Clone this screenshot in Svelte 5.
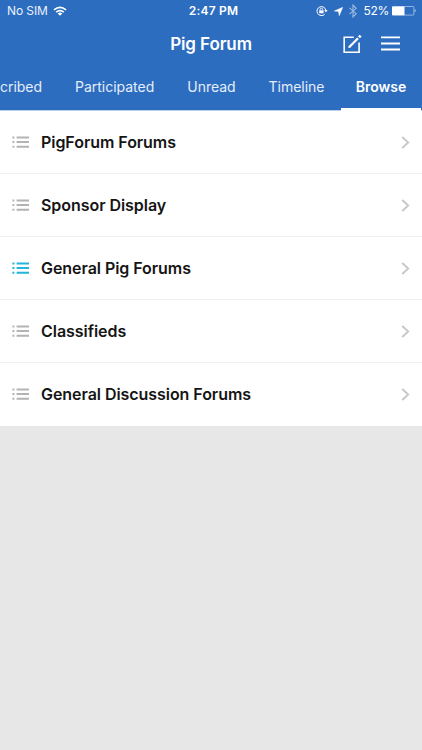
<script>
  const tabs = [
    { label: 'Subscribed' },
    { label: 'Participated' },
    { label: 'Unread' },
    { label: 'Timeline' },
    { label: 'Browse', active: true }
  ];
  const forums = [
    { name: 'PigForum Forums' },
    { name: 'Sponsor Display' },
    { name: 'General Pig Forums', unread: true },
    { name: 'Classifieds' },
    { name: 'General Discussion Forums' }
  ];
</script>

<div class="screen">
  <header>
    <div class="status">
      <div class="carrier">
        <span>No SIM</span>
        <svg width="14" height="10" viewBox="0 0 14 10" fill="none" stroke="#fff" stroke-width="1.7">
          <path d="M1 3.8Q7-1.2 13 3.8" />
          <path d="M3.2 6.2Q7 3 10.8 6.2" />
          <path d="M4.7 7.5Q7 5.7 9.3 7.5L7 9.8Z" fill="#fff" stroke="none" />
        </svg>
      </div>
      <span class="time">2:47 PM</span>
      <div class="indicators">
        <svg class="lock" width="12" height="12" viewBox="0 0 12 12" fill="none" stroke="#fff">
          <path d="M8.6 9.4A4.5 4.5 0 1 1 9.9 5.2" stroke-width="1" />
          <path d="M8.3 5.1H11.6L9.9 7.4Z" fill="#fff" stroke="none" />
          <rect x="3.2" y="5.3" width="4.4" height="3" fill="#fff" stroke="none" />
          <path d="M4.1 5.4V4.5A1.3 1.3 0 0 1 6.7 4.5V5.4" stroke-width=".9" />
        </svg>
        <svg class="arrow" width="9" height="9" viewBox="0 0 9 9"><path d="M8.8.2L5.2 8.8L4.5 4.6L.2 4.1Z" fill="#fff" stroke="#fff" stroke-width=".4" /></svg>
        <svg class="bluetooth" width="8" height="14" viewBox="0 0 8 14" fill="none" stroke="#9dbce4" stroke-width="1.1">
          <path d="M.5 3.9L7.2 9.7L4 12.9V1.1L7.2 4.3L.5 10.1" />
        </svg>
        <span class="percent">52%</span>
        <svg width="24" height="10" viewBox="0 0 24 10">
          <rect x=".5" y=".5" width="21.4" height="8.6" rx=".8" fill="none" stroke="#a9c5e9" stroke-width=".8" />
          <rect x="0" y=".5" width="12.5" height="8.8" rx=".6" fill="#fff" />
          <path d="M22.7 3.1Q24.6 4.8 22.7 6.5Z" fill="#c4d8f0" />
        </svg>
      </div>
    </div>

    <div class="titlebar">
      <h1>Pig Forum</h1>
      <div class="actions">
        <svg width="20" height="20" viewBox="0 0 20 20" fill="none" stroke="#fff">
          <path d="M11.8 3.3H2.2V18.2H17.1V8.6" stroke-width="1.6" />
          <path d="M7.3 13L16 4.2" stroke-width="2.2" />
          <path d="M6.3 14.1L6.8 11.7L8.7 13.6Z" fill="#fff" stroke="none" />
          <path d="M17 3.2L18.6 1.6" stroke-width="2.7" />
        </svg>
        <svg width="19" height="15" viewBox="0 0 19 15" stroke="#fff" stroke-width="1.8">
          <path d="M0 1.4H19M0 7.5H19M0 13.5H19" />
        </svg>
      </div>
    </div>

    <nav>
      {#each tabs as tab}
        <div class="tab" class:active={tab.active}>{tab.label}</div>
      {/each}
    </nav>
  </header>

  <main>
    {#each forums as forum}
      <div class="row">
        <svg class="list" class:unread={forum.unread} width="17" height="12" viewBox="0 0 17 12" stroke="currentColor" stroke-width="2">
          <path d="M.4 1.6H2.4M.4 6.1H2.4M.4 10.7H2.4M4.6 1.6H17M4.6 6.1H17M4.6 10.7H17" />
        </svg>
        <span class="name">{forum.name}</span>
        <svg class="chevron" width="9" height="13" viewBox="0 0 9 13" fill="none" stroke="#c7c7cc" stroke-width="1.9">
          <path d="M1.2 1L7.2 6.5L1.2 12" />
        </svg>
      </div>
    {/each}
  </main>
</div>

<style>
  .screen {
    width: 422px;
    height: 750px;
    overflow: hidden;
    background: #e7e7e7;
    font-family: Inter, "Liberation Sans", sans-serif;
  }
  svg { display: block; flex: none; }
  header {
    height: 110px;
    background: #2d6dc0;
    color: #fff;
    border-bottom: 1px solid #b9d0ef;
    box-sizing: content-box;
  }
  .status {
    display: grid;
    grid-template-columns: 1fr auto 1fr;
    align-items: center;
    height: 22px;
    padding: 0 6px 0 7px;
    font-size: 12px;
    line-height: 22px;
  }
  .carrier { display: flex; align-items: center; gap: 5px; color: #e9f1fb; }
  .carrier span { letter-spacing: -0.1px; }
  .time { font-weight: 600; letter-spacing: 0.2px; padding-left: 4px; }
  .indicators { display: flex; align-items: center; justify-content: flex-end; }
  .arrow { margin-left: 6px; }
  .bluetooth { margin-left: 6px; }
  .percent { margin: 0 3px 0 7px; letter-spacing: -0.3px; }
  .titlebar {
    display: grid;
    grid-template-columns: 1fr auto 1fr;
    align-items: center;
    height: 43px;
    padding: 0 22px;
  }
  h1 {
    grid-column: 2;
    margin: 0;
    font-size: 17px;
    line-height: 24px;
    font-weight: 600;
    letter-spacing: -0.1px;
  }
  .actions { display: flex; justify-content: flex-end; align-items: center; gap: 19px; }
  nav {
    display: flex;
    justify-content: flex-end;
    height: 45px;
    padding-right: 1px;
  }
  .tab {
    flex: none;
    box-sizing: border-box;
    height: 46px;
    padding: 0 16.5px;
    font-size: 14px;
    line-height: 44px;
    letter-spacing: -0.02px;
    color: #e4eefa;
    white-space: nowrap;
  }
  .active {
    width: 80px;
    padding: 0;
    text-align: center;
    font-weight: 600;
    color: #fff;
    border-bottom: 3px solid #fff;
  }
  main { background: #fff; height: 315px; }
  .row {
    display: flex;
    align-items: center;
    box-sizing: border-box;
    height: 63px;
    padding: 0 12px;
    border-bottom: 1px solid #f0f0f0;
  }
  .row:last-child { border-bottom-color: #fff; }
  .list { color: #b3b3b3; }
  .unread { color: #25b5d9; }
  .name {
    flex: 1;
    margin-left: 12px;
    font-size: 16px;
    line-height: 22px;
    font-weight: 600;
    letter-spacing: -0.05px;
    color: #151515;
    white-space: nowrap;
  }
</style>
